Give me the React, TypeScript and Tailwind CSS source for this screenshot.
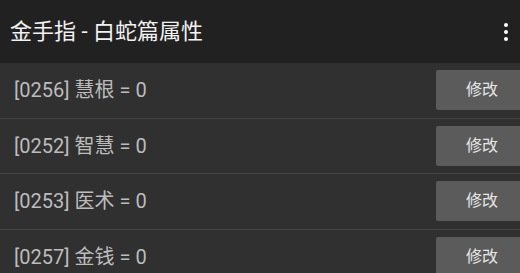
import React from 'react';

const items = [
  { id: '0256', name: '慧根', value: 0 },
  { id: '0252', name: '智慧', value: 0 },
  { id: '0253', name: '医术', value: 0 },
  { id: '0257', name: '金钱', value: 0 },
];

const font = { fontFamily: 'Roboto, "Noto Sans CJK SC", sans-serif' };

export default function App() {
  return (
    <div className="h-[273px] w-[520px] overflow-hidden bg-[#303030]" style={font}>
      {/* 标题栏 */}
      <header className="flex h-[63px] items-center justify-between bg-[#212121] pl-[10px] pr-[12px]">
        <h1 className="text-[22px] text-[#f2f2f2]">金手指 - 白蛇篇属性</h1>
        <div className="flex flex-col gap-[3px]">
          <span className="h-[4px] w-[4px] rounded-full bg-white" />
          <span className="h-[4px] w-[4px] rounded-full bg-white" />
          <span className="h-[4px] w-[4px] rounded-full bg-white" />
        </div>
      </header>

      {/* 属性列表 */}
      <ul>
        {items.map(item => (
          <li
            key={item.id}
            className="flex h-[55.6px] items-center justify-between border-b border-[#454545] pl-[14px]"
          >
            <span className="text-[20px] text-[#bcbcbc]">
              [{item.id}] {item.name} = {item.value}
            </span>
            <button className="-mr-[8px] h-[40px] w-[92px] shrink-0 rounded-[2px] bg-[#5b5b5b] text-[16px] text-[#e6e6e6]">
              修改
            </button>
          </li>
        ))}
      </ul>
    </div>
  );
}
